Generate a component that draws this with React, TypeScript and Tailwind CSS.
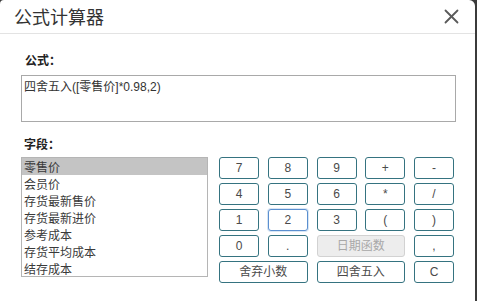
import { useState } from "react";

const fields = ["零售价", "会员价", "存货最新售价", "存货最新进价", "参考成本", "存货平均成本", "结存成本"];

type Key = { label: string; span?: string; disabled?: boolean; focus?: boolean };

const keys: Key[] = [
  { label: "7" }, { label: "8" }, { label: "9" }, { label: "+" }, { label: "-" },
  { label: "4" }, { label: "5" }, { label: "6" }, { label: "*" }, { label: "/" },
  { label: "1" }, { label: "2", focus: true }, { label: "3" }, { label: "(" }, { label: ")" },
  { label: "0" }, { label: "." }, { label: "日期函数", span: "col-span-2", disabled: true }, { label: "," },
  { label: "舍弃小数", span: "col-span-2" }, { label: "四舍五入", span: "col-span-2" }, { label: "C" },
];

const CloseIcon = () => (
  <svg width="15" height="15" viewBox="0 0 15 15" fill="none" stroke="#5a5a5a" strokeWidth="1.8" strokeLinecap="round">
    <line x1="1.5" y1="1.5" x2="13.5" y2="13.5" />
    <line x1="13.5" y1="1.5" x2="1.5" y2="13.5" />
  </svg>
);

export default function App() {
  const [selected, setSelected] = useState(0);

  return (
    <div className="w-[477px] h-[301px] bg-[#3b3b3b] overflow-hidden font-['Liberation_Sans','Noto_Sans_CJK_SC',sans-serif]">
      <div className="w-[475px] h-full bg-white rounded-tl-[4px] rounded-tr-[6px]">
        {/* Header */}
        <div className="h-[34px] border-b border-[#e3e3e3] flex items-center justify-between pl-[14px] pr-[16px]">
          <span className="text-[18px] leading-none text-[#333] font-['Noto_Sans_CJK_SC',sans-serif] -mt-[1px]">公式计算器</span>
          <CloseIcon />
        </div>

        <div className="px-[21px] pt-[18px]">
          <div className="pl-[4px] text-[12px] leading-[16px] font-bold text-[#222] font-['Noto_Sans_CJK_SC',sans-serif]">公式：</div>
          <div className="mt-[7px] w-[435px] h-[47px] border border-[#a9a9a9] px-[2px] pt-[3px] text-[12px] leading-[16px] text-[#333]">
            四舍五入([零售价]*0.98,2)
          </div>

          <div className="mt-[14px] pl-[3px] text-[12px] leading-[16px] font-bold text-[#222] font-['Noto_Sans_CJK_SC',sans-serif]">字段：</div>

          <div className="mt-[5px] flex gap-[11px]">
            <div className="w-[188px] h-[120px] border border-[#b5b5b5] overflow-hidden">
              {fields.map((f, i) => (
                <div
                  key={f}
                  onClick={() => setSelected(i)}
                  className={
                    "h-[17px] leading-[17px] pl-[2px] text-[12px] text-[#3a3a3a] font-['Noto_Sans_CJK_SC',sans-serif] cursor-default " +
                    (i === selected ? "bg-[#c4c4c4]" : "")
                  }
                >
                  {f}
                </div>
              ))}
            </div>

            <div className="grid grid-cols-[repeat(5,40px)] auto-rows-[22px] gap-x-[8.75px] gap-y-[4px]">
              {keys.map((k) => (
                <button
                  key={k.label}
                  disabled={k.disabled}
                  className={
                    "rounded-[3px] border text-[12px] leading-none font-['Liberation_Sans','Noto_Sans_CJK_SC',sans-serif] " +
                    (k.span ? k.span + " " : "") +
                    (k.disabled
                      ? "bg-[#ededed] border-[#d2d2d2] text-[#a8a8a8]"
                      : k.focus
                      ? "bg-white border-[#5b8fcf] text-[#4a4a4a] shadow-[0_0_0_1px_#d7e6f5]"
                      : "bg-white border-[#357380] text-[#4a4a4a]")
                  }
                >
                  {k.label}
                </button>
              ))}
            </div>
          </div>
        </div>
      </div>
    </div>
  );
}
